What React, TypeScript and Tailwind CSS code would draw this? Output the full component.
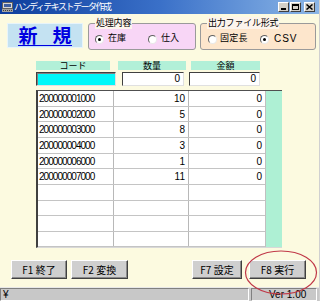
import React from "react";

const jp = { fontFamily: '"Noto Sans CJK JP", "Liberation Sans", sans-serif' };
const num = { fontFamily: '"Liberation Sans", Arial, sans-serif' };

function Radio({ checked }: { checked: boolean }) {
  return (
    <span className="relative inline-block shrink-0 w-[9px] h-[9px] rounded-full bg-white border border-t-[#606060] border-l-[#606060] border-b-[#e8e8e8] border-r-[#e8e8e8]">
      {checked && (
        <span className="absolute left-[2px] top-[2px] w-[3px] h-[3px] rounded-full bg-black" />
      )}
    </span>
  );
}

function Group({
  label,
  bg,
  width,
  children,
}: {
  label: string;
  bg: string;
  width: string;
  children: React.ReactNode;
}) {
  return (
    <div className={`relative h-[27px] ${width} ${bg} border border-[#9a9a9a] rounded-[3px]`}>
      <span
        className="absolute left-[6px] -top-[7px] px-[1px] text-[9px] leading-[12px] text-black bg-[#fcf4ec] whitespace-nowrap tracking-[-0.2px]"
        style={jp}
      >
        {label}
      </span>
      <div className="flex items-center h-full pt-[3px]">{children}</div>
    </div>
  );
}

function Btn({ label, w }: { label: string; w: string }) {
  return (
    <div
      className={`${w} h-[19px] bg-[#cfcfcf] border border-t-white border-l-white border-b-[#404040] border-r-[#404040] shadow-[inset_-1px_-1px_0_#8a8a8a] flex items-center justify-center text-[10px] text-black whitespace-nowrap`}
      style={jp}
    >
      {label}
    </div>
  );
}

const rows: [string, string, string][] = [
  ["200000001000", "10", "0"],
  ["200000002000", "5", "0"],
  ["200000003000", "8", "0"],
  ["200000004000", "3", "0"],
  ["200000006000", "1", "0"],
  ["200000007000", "11", "0"],
  ["", "", ""],
  ["", "", ""],
  ["", "", ""],
  ["", "", ""],
];

export default function App() {
  return (
    <div className="w-[320px] h-[301px] bg-[#fcfae0] flex flex-col relative overflow-hidden border-r border-[#d0d0d0]">
      {/* Title bar */}
      <div className="h-[14px] flex items-center bg-gradient-to-r from-[#0c3c9c] via-[#3a70c8] to-[#8cb6e6] pl-[2px] pr-[4px]">
        <svg width="11" height="10" viewBox="0 0 11 10" className="mr-[1px]">
          <rect x="0.5" y="0.5" width="10" height="6" fill="#d8d8d8" stroke="#606060" />
          <rect x="2" y="2" width="7" height="3" fill="#4060a0" />
          <rect x="0" y="7" width="11" height="3" fill="#a0a0a0" />
          <line x1="1" y1="8.5" x2="10" y2="8.5" stroke="#404040" strokeDasharray="1 1" />
        </svg>
        <span className="text-white text-[9px] leading-[12px] tracking-[-1.5px] whitespace-nowrap" style={jp}>
          ハンディテキストデータ作成
        </span>
        <div className="ml-auto flex items-center">
          <div className="w-[11px] h-[10px] bg-[#d4d0c8] border border-t-white border-l-white border-b-[#404040] border-r-[#404040] flex items-end justify-center pb-[1px]">
            <div className="w-[5px] h-[2px] bg-black" />
          </div>
          <div className="w-[11px] h-[10px] bg-[#d4d0c8] border border-t-white border-l-white border-b-[#404040] border-r-[#404040] flex items-center justify-center ml-[1px]">
            <div className="w-[7px] h-[6px] border border-black border-t-2" />
          </div>
          <div className="w-[11px] h-[10px] bg-[#d4d0c8] border border-t-white border-l-white border-b-[#404040] border-r-[#404040] flex items-center justify-center ml-[3px]">
            <svg width="7" height="6" viewBox="0 0 7 6">
              <path d="M0.5 0.5 L6.5 5.5 M6.5 0.5 L0.5 5.5" stroke="black" strokeWidth="1.5" />
            </svg>
          </div>
        </div>
      </div>

      {/* Top row */}
      <div className="flex items-start pt-[9px] pl-[7px]">
        <div className="w-[76px] h-[25px] bg-[#c4e2f2] border border-[#e8f4fa] flex items-center justify-center">
          <div
            className="flex gap-[15px] text-[#0000e0] text-[19px] leading-[20px] font-bold border-b-[1.5px] border-[#0000e0] whitespace-nowrap"
            style={jp}
          >
            <span>新</span>
            <span>規</span>
          </div>
        </div>
        <div className="ml-[5px]">
          <Group label="処理内容" bg="bg-[#f8d6f6]" width="w-[108px]">
            <span className="ml-[6px]"><Radio checked /></span>
            <span className="text-[9px] ml-[4px]" style={jp}>在庫</span>
            <span className="ml-[22px]"><Radio checked={false} /></span>
            <span className="text-[9px] ml-[4px]" style={jp}>仕入</span>
          </Group>
        </div>
        <div className="ml-[4px]">
          <Group label="出力ファイル形式" bg="bg-[#fde6cc]" width="w-[116px]">
            <span className="ml-[7px]"><Radio checked={false} /></span>
            <span className="text-[9px] ml-[3px] tracking-[0.3px]" style={jp}>固定長</span>
            <span className="ml-[12px]"><Radio checked /></span>
            <span className="text-[10px] ml-[5px] tracking-[1px]" style={num}>CSV</span>
          </Group>
        </div>
      </div>

      {/* Headers */}
      <div className="flex pl-[36px] mt-[11px]">
        <div className="w-[74px] h-[9px] bg-[#b2f0d8] flex items-center justify-center text-[9px] leading-[9px]" style={jp}>
          コード
        </div>
        <div className="w-[68px] h-[9px] bg-[#b2f0d8] ml-[8px] flex items-center justify-center text-[9px] leading-[9px]" style={jp}>
          数量
        </div>
        <div className="w-[69px] h-[9px] bg-[#b2f0d8] ml-[5px] flex items-center justify-center text-[9px] leading-[9px]" style={jp}>
          金額
        </div>
      </div>

      {/* Inputs */}
      <div className="flex pl-[36px] mt-[2px]">
        <div className="w-[80px] h-[14px] bg-[#00f8f8] border border-t-[#404040] border-l-[#404040] border-b-[#e0e0e0] border-r-[#e0e0e0] shadow-[inset_1px_1px_0_#808080]" />
        <div
          className="w-[62px] h-[14px] ml-[6px] bg-white border border-t-[#404040] border-l-[#404040] border-b-[#e0e0e0] border-r-[#e0e0e0] flex items-center justify-end pr-[3px] text-[10px] leading-[12px]"
          style={num}
        >
          0
        </div>
        <div
          className="w-[71px] h-[14px] ml-[5px] bg-white border border-t-[#404040] border-l-[#404040] border-b-[#e0e0e0] border-r-[#e0e0e0] flex items-center justify-end pr-[3px] text-[10px] leading-[12px]"
          style={num}
        >
          0
        </div>
      </div>

      {/* Grid */}
      <div className="ml-[36px] mt-[4px] w-[246px] h-[158px] flex border-t border-l-2 border-t-[#505050] border-l-[#404040] border-b border-b-[#d8d8d8]">
        <div className="w-[228px] bg-white flex flex-col">
          {rows.map((r, i) => (
            <div key={i} className="flex h-[15.7px] border-b border-[#c4c4c4]">
              <div className="w-[76px] border-r border-[#b8b8b8] text-[10px] leading-[15px] pl-[1px] tracking-[-0.95px] text-black" style={num}>
                {r[0]}
              </div>
              <div className="w-[75px] border-r border-[#b8b8b8] text-[10px] leading-[15px] text-right pr-[3px] text-black" style={num}>
                {r[1]}
              </div>
              <div className="w-[76px] text-[10px] leading-[15px] text-right pr-[3px] text-black" style={num}>
                {r[2]}
              </div>
            </div>
          ))}
        </div>
        <div className="w-[17px] bg-[#aef0d4] border-l border-[#c0c0c0]" />
      </div>

      {/* Buttons */}
      <div className="flex mt-[12px] pl-[11px]">
        <Btn label="F1 終了" w="w-[56px]" />
        <div className="ml-[4px]">
          <Btn label="F2 変換" w="w-[57px]" />
        </div>
        <div className="ml-[64px]">
          <Btn label="F7 設定" w="w-[50px]" />
        </div>
        <div className="ml-[7px]">
          <Btn label="F8 実行" w="w-[57px]" />
        </div>
      </div>

      {/* Status bar */}
      <div className="mt-auto h-[14px] bg-[#c8c8c8] flex border-t border-[#e8e8e8]">
        <div className="w-[249px] h-full border border-t-[#808080] border-l-[#808080] border-b-white border-r-white text-[10px] leading-[11px] pl-[2px]" style={num}>
          ¥
        </div>
        <div className="ml-[2px] w-[66px] h-full border border-t-[#808080] border-l-[#808080] border-b-white border-r-white text-[10px] leading-[11px] pl-[17px]" style={num}>
          Ver 1.00
        </div>
      </div>

      {/* Red ellipse annotation */}
      <svg className="absolute left-[244px] top-[249px]" width="74" height="47" viewBox="0 0 74 47">
        <ellipse cx="37" cy="23.5" rx="35.5" ry="21.5" fill="none" stroke="#c03848" strokeWidth="1.2" />
      </svg>
    </div>
  );
}
